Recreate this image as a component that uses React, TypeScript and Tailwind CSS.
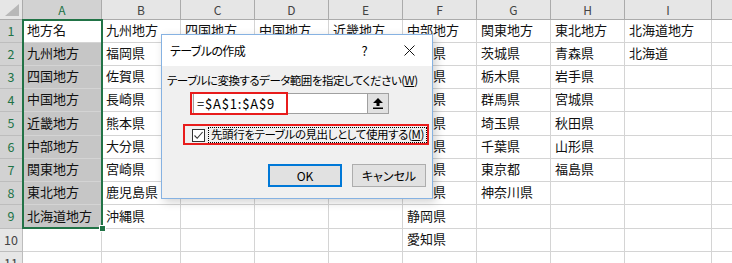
import React from "react";

const jp = "font-['Noto_Sans_CJK_JP','Noto_Sans',sans-serif]";

const letters = ["A", "B", "C", "D", "E", "F", "G", "H", "I", "J"];

const rows: string[][] = [
  ["地方名", "九州地方", "四国地方", "中国地方", "近畿地方", "中部地方", "関東地方", "東北地方", "北海道地方", ""],
  ["九州地方", "福岡県", "徳島県", "鳥取県", "三重県", "新潟県", "茨城県", "青森県", "北海道", ""],
  ["四国地方", "佐賀県", "香川県", "島根県", "滋賀県", "富山県", "栃木県", "岩手県", "", ""],
  ["中国地方", "長崎県", "愛媛県", "岡山県", "京都府", "石川県", "群馬県", "宮城県", "", ""],
  ["近畿地方", "熊本県", "高知県", "広島県", "大阪府", "福井県", "埼玉県", "秋田県", "", ""],
  ["中部地方", "大分県", "", "山口県", "兵庫県", "山梨県", "千葉県", "山形県", "", ""],
  ["関東地方", "宮崎県", "", "", "奈良県", "長野県", "東京都", "福島県", "", ""],
  ["東北地方", "鹿児島県", "", "", "和歌山県", "岐阜県", "神奈川県", "", "", ""],
  ["北海道地方", "沖縄県", "", "", "", "静岡県", "", "", "", ""],
  ["", "", "", "", "", "愛知県", "", "", "", ""],
  ["", "", "", "", "", "", "", "", "", ""],
];

function Corner() {
  return (
    <div className="bg-[#e6e6e6] border-r border-b border-[#ababab] flex items-end justify-end pr-[3px] pb-[3px]">
      <svg width="14" height="12" viewBox="0 0 14 12">
        <polygon points="14,0 14,12 0,12" fill="#b8b8b8" />
      </svg>
    </div>
  );
}

function ColHeader({ label, active }: { label: string; active: boolean }) {
  return (
    <div
      className={
        active
          ? "bg-[#d2d2d2] border-r border-b border-[#ababab] flex items-center justify-center text-[#217346] text-[12px]"
          : "bg-[#e6e6e6] border-r border-b border-[#ababab] flex items-center justify-center text-[#444] text-[12px]"
      }
    >
      {label}
    </div>
  );
}

function RowHeader({ n }: { n: number }) {
  const active = n <= 9;
  return (
    <div
      className={
        active
          ? "bg-[#d2d2d2] border-r border-b border-[#bdbdbd] flex items-center justify-center text-[#217346] text-[12.5px]"
          : "bg-[#e6e6e6] border-r border-b border-[#bdbdbd] flex items-center justify-center text-[#444] text-[12.5px]"
      }
    >
      {n}
    </div>
  );
}

function Cell({ text, selected }: { text: string; selected: boolean }) {
  return (
    <div
      className={
        selected
          ? "bg-[#c6c6c6] border-r border-b border-[#d4d4d4] flex items-center pl-[4px] pb-[3px] text-[13px] leading-none text-[#111] whitespace-nowrap"
          : "bg-white border-r border-b border-[#d4d4d4] flex items-center pl-[4px] pb-[3px] text-[13px] leading-none text-[#111] whitespace-nowrap"
      }
    >
      {text}
    </div>
  );
}

function UploadIcon() {
  return (
    <svg width="10" height="11" viewBox="0 0 10 11">
      <polygon points="5,0 10,5 6.5,5 6.5,8 3.5,8 3.5,5 0,5" fill="#000" />
      <rect x="0" y="9.5" width="10" height="1.5" fill="#000" />
    </svg>
  );
}

function Dialog() {
  return (
    <div className="absolute left-[161px] top-[34px] w-[272px] h-[165px] border border-[#86b2e2] bg-[#f0f0f0] shadow-[3px_3px_9px_rgba(0,0,0,0.18)] flex flex-col text-black [font-feature-settings:'palt']">
      <div className="h-[31px] bg-white flex items-center">
        <span className="pl-[8px] flex-1 text-[12px] tracking-[-0.6px]">テーブルの作成</span>
        <span className="w-[45px] text-center text-[13px]">?</span>
        <span className="w-[45px] flex justify-center">
          <svg width="11" height="11" viewBox="0 0 11 11">
            <path d="M0.5 0.5 L10.5 10.5 M10.5 0.5 L0.5 10.5" stroke="#111" strokeWidth="1" />
          </svg>
        </span>
      </div>

      <div className="flex-1 flex flex-col">
        <p className="mt-[6px] pl-[5px] text-[11.5px] tracking-[-0.5px] leading-[16px] whitespace-nowrap">
          テーブルに変換するデータ範囲を指定してください(<span className="underline">W</span>)
        </p>

        <div className="mt-[5px] ml-[31px] w-[196px] h-[21px] flex border border-[#a0a0a0] bg-white">
          <span className="flex-1 pl-[3px] flex items-center text-[13px] tracking-[0.8px]">=$A$1:$A$9</span>
          <span className="w-[21px] bg-[#e1e1e1] border-l border-[#a0a0a0] flex items-center justify-center">
            <UploadIcon />
          </span>
        </div>

        <div className="mt-[13px] ml-[30px] flex items-center">
          <span className="w-[13px] h-[13px] border border-[#333] bg-white flex items-center justify-center">
            <svg width="11" height="11" viewBox="0 0 11 11">
              <path d="M1.5 5.5 L4.2 8.3 L9.6 2" stroke="#333" strokeWidth="1.1" fill="none" />
            </svg>
          </span>
          <span className="ml-[3px] h-[16px] px-[2px] border border-dotted border-black flex items-center text-[11.5px] tracking-[-0.4px] whitespace-nowrap">
            先頭行をテーブルの見出しとして使用する(<span className="underline">M</span>)
          </span>
        </div>

        <div className="mt-[21px] pr-[6px] flex justify-end gap-[10px]">
          <button className="w-[74px] h-[23px] border-2 border-[#0078d7] bg-[#e1e1e1] text-[12px] flex items-center justify-center">
            OK
          </button>
          <button className="w-[74px] h-[23px] border border-[#adadad] bg-[#e1e1e1] text-[12px] flex items-center justify-center">
            キャンセル
          </button>
        </div>
      </div>

      <div className="absolute left-[28px] top-[57px] w-[98px] h-[23px] border-2 border-[#e81c1c]" />
      <div className="absolute left-[21px] top-[89px] w-[246px] h-[21px] border-2 border-[#e81c1c]" />
    </div>
  );
}

export default function App() {
  return (
    <div className={`relative w-[732px] h-[263px] overflow-hidden bg-white ${jp}`}>
      <div className="grid grid-cols-[23px_79px_79px_74px_74px_74px_74px_74px_74px_87px_80px] grid-rows-[20px_23px_23px_23px_23px_24px_23px_23px_23px_24px_23px_23px]">
        <Corner />
        {letters.map((l) => (
          <ColHeader key={l} label={l} active={l === "A"} />
        ))}
        {rows.map((r, i) => (
          <React.Fragment key={i}>
            <RowHeader n={i + 1} />
            {r.map((t, j) => (
              <Cell key={j} text={t} selected={j === 0 && i >= 1 && i <= 8} />
            ))}
          </React.Fragment>
        ))}
      </div>

      {/* selection frame A1:A9 */}
      <div className="absolute left-[22px] top-[19px] w-[81px] h-[210px] border-2 border-[#217346]" />
      <div className="absolute left-[99px] top-[225px] w-[7px] h-[7px] bg-[#217346] border border-white" />

      <Dialog />
    </div>
  );
}
